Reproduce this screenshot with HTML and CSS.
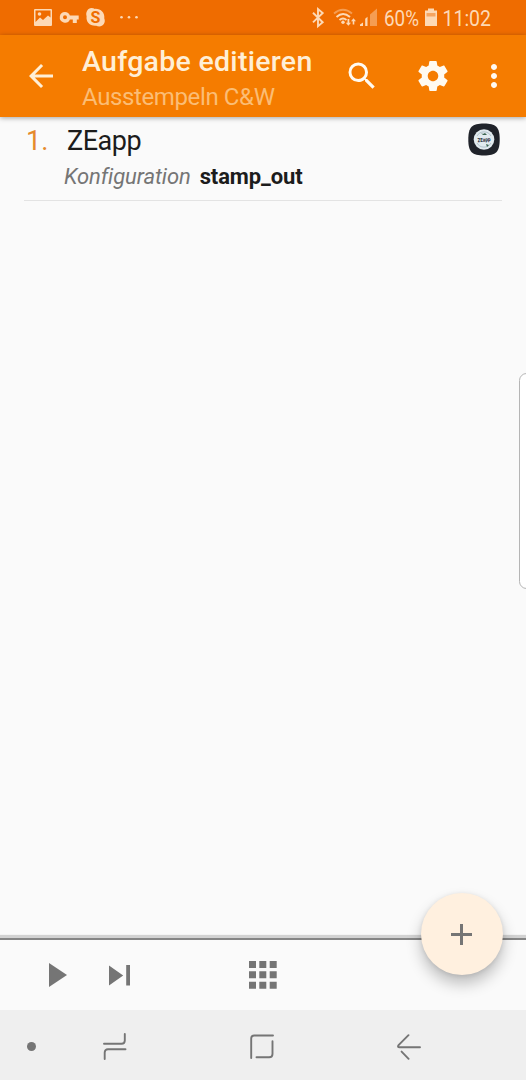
FILE: index.html
```html
<!DOCTYPE html>
<html lang="de">
<head>
  <meta charset="UTF-8" />
  <meta name="viewport" content="width=device-width, initial-scale=1.0"/>
  <title>Aufgabe editieren</title>
  <link rel="stylesheet" href="styles.css">
</head>
<body>

<div class="status-bar">
  <svg class="status-icons" width="110" height="35" viewBox="34 0 110 35">
    <!-- picture -->
    <path fill-rule="evenodd" d="M35 9h16a1 1 0 0 1 1 1v15a1 1 0 0 1-1 1H35a1 1 0 0 1-1-1V10a1 1 0 0 1 1-1zM35.500 10.500v11.500l4.500-4.500 3 2.500 5-4.500 2.500 2v-7z"/>
    <circle cx="39.500" cy="14" r="1.800"/>
    <!-- key -->
    <path fill-rule="evenodd" d="M65 12a5.300 5.300 0 0 1 4.900 3.500h8.800v4h-1.900v3.500h-4v-3.500h-2.900A5.300 5.300 0 1 1 65 12zm0 3.300a2 2 0 1 0 0 4 2 2 0 0 0 0-4z"/>
    <!-- skype -->
    <path d="M91.500 8c1.300 0 2.400.300 3.400.900C100.500 8.500 105 12.500 104.300 18.500c1.700 4-1.300 8-5 8-1.100 0-2.200-.300-3.100-.800C90 26.300 85.800 22 86.600 16.200 85.300 12.400 87.800 8 91.500 8z"/>
    <text class="skype-letter" x="95.400" y="22.800" text-anchor="middle">S</text>
    <circle cx="121.500" cy="17.300" r="1.300"/>
    <circle cx="129" cy="17.300" r="1.300"/>
    <circle cx="136.500" cy="17.300" r="1.300"/>
  </svg>
  <svg class="status-icons" width="190" height="35" viewBox="311 0 190 35">
    <!-- bluetooth -->
    <path class="line" d="M313 12.800l9.700 9.400-4.700 4V9l4.700 4-9.700 9.400"/>
    <!-- wifi -->
    <path class="line dim" d="M334 13.500q9-7.500 18 0"/>
    <path class="line" d="M336.500 17q6.500-6 13.500 0M339.500 20q3.500-3 7 0"/>
    <circle cx="343" cy="22.200" r="1.700"/>
    <path d="M347.500 19h1.800v3.800h1.700l-2.600 3-2.600-3h1.700zM352.700 24.500h1.600v-3.200h1.700l-2.500-3-2.500 3h1.700z"/>
    <!-- signal -->
    <path class="dim" d="M370 14.500l7-6V26h-7z"/>
    <path d="M360 26v-1.600l3-2V26zM365.200 26v-7.200l2.300-2V26z"/>
    <text class="status-text" x="384" y="25.800" textLength="35" lengthAdjust="spacingAndGlyphs">60%</text>
    <!-- battery -->
    <path d="M428 8.500h6v2h3V26h-12V10.500h3z"/>
    <path class="battery-gap" d="M426.500 13h9v3.500h-9z"/>
    <text class="status-text" x="442.500" y="25.800" textLength="48.500" lengthAdjust="spacingAndGlyphs">11:02</text>
  </svg>
</div>

<header class="app-bar">
  <svg class="bar-icon back" viewBox="0 0 24 24"><path d="M20 11H7.830l5.590-5.590L12 4l-8 8 8 8 1.410-1.410L7.830 13H20v-2z"/></svg>
  <div class="titles">
    <h1>Aufgabe editieren</h1>
    <p>Ausstempeln C&amp;W</p>
  </div>
  <svg class="bar-icon search" viewBox="0 0 24 24"><path d="M15.500 14h-.790l-.280-.270A6.471 6.471 0 0 0 16 9.500 6.500 6.500 0 1 0 9.500 16c1.610 0 3.090-.590 4.230-1.570l.270.280v.790l5 4.990L20.490 19l-4.990-5zm-6 0C7.010 14 5 11.990 5 9.500S7.010 5 9.500 5 14 7.010 14 9.500 11.990 14 9.500 14z"/></svg>
  <svg class="bar-icon gear" viewBox="0 0 24 24"><path d="M19.430 12.980c.040-.320.070-.640.070-.980s-.030-.660-.070-.980l2.110-1.650c.190-.150.240-.420.120-.640l-2-3.460c-.120-.220-.390-.300-.610-.220l-2.490 1c-.520-.400-1.080-.730-1.690-.980l-.380-2.650C14.460 2.180 14.250 2 14 2h-4c-.250 0-.460.180-.490.420l-.380 2.650c-.610.250-1.170.590-1.690.980l-2.490-1c-.230-.090-.490 0-.610.220l-2 3.460c-.130.220-.070.490.120.640l2.110 1.650c-.040.320-.070.650-.070.980s.030.660.070.980l-2.110 1.650c-.190.150-.240.420-.120.640l2 3.460c.120.220.390.300.610.220l2.490-1c.520.400 1.080.730 1.690.980l.380 2.650c.030.240.240.420.490.420h4c.250 0 .460-.180.490-.420l.380-2.650c.610-.250 1.170-.590 1.690-.980l2.490 1c.230.090.490 0 .610-.220l2-3.460c.120-.220.070-.490-.120-.640l-2.110-1.650zM12 15.500c-1.930 0-3.500-1.570-3.500-3.500s1.570-3.500 3.500-3.500 3.500 1.570 3.500 3.500-1.570 3.500-3.500 3.500z"/></svg>
  <svg class="bar-icon more" viewBox="0 0 24 24"><path d="M12 8c1.100 0 2-.900 2-2s-.900-2-2-2-2 .900-2 2 .900 2 2 2zm0 2c-1.100 0-2 .900-2 2s.900 2 2 2 2-.900 2-2-.900-2-2-2zm0 6c-1.100 0-2 .900-2 2s.900 2 2 2 2-.900 2-2-.900-2-2-2z"/></svg>
</header>

<main class="task-list">
  <div class="task-item">
    <span class="task-number">1.</span>
    <div class="task-content">
      <div class="task-name">ZEapp</div>
      <div class="task-config"><em>Konfiguration</em><strong>stamp_out</strong></div>
    </div>
    <svg class="app-icon" width="32" height="33" viewBox="0 0 32 33">
      <path class="app-tile" d="M16 .500C28 .500 31.700 4 31.700 16.500S28 32.500 16 32.500.300 29 .300 16.500 4 .500 16 .500z"/>
      <circle class="app-disc" cx="16" cy="16.500" r="10.300"/>
      <path class="app-ring" d="M9 13a8 8 0 0 1 14 0M9 20a8 8 0 0 0 14 0"/>
      <path class="app-mark" d="M13 10l2 1 2-1 2 2h-4zM18 21l3 1-2 2z"/>
      <text class="app-label" x="16" y="18.600" text-anchor="middle" textLength="13" lengthAdjust="spacingAndGlyphs" transform="rotate(-5 16 17)">ZEapp</text>
    </svg>
  </div>
  <div class="edge-handle"></div>
</main>

<div class="toolbar">
  <svg class="play" width="18" height="24" viewBox="0 0 18 24"><path d="M0 0l18 12L0 24z"/></svg>
  <svg class="next" width="21" height="21" viewBox="0 0 21 21"><path d="M0 .500l14.200 10L0 20.500zM17.200 0H21v20.500h-3.800z"/></svg>
  <svg class="grid" width="28" height="28" viewBox="0 0 28 28"><path d="M0 0h7v7H0zM10.300 0h7v7h-7zM20.700 0h7v7h-7zM0 10.300h7v7H0zM10.300 10.300h7v7h-7zM20.700 10.300h7v7h-7zM0 20.700h7v7H0zM10.300 20.700h7v7h-7zM20.700 20.700h7v7h-7z"/></svg>
  <button class="add-btn" title="Hinzufügen">
    <svg width="21" height="21" viewBox="0 0 21 21"><path d="M9 0h3v9h9v3h-9v9H9v-9H0V9h9z"/></svg>
  </button>
</div>

<nav class="nav-bar">
  <span class="nav-dot"></span>
  <svg class="recents" width="24" height="27" viewBox="0 0 24 27"><path d="M1 10.700h17.500q3.300 0 3.300-3.300V1M22.500 16.300H5q-3.300 0-3.300 3.300V26"/></svg>
  <svg class="home" width="24" height="25" viewBox="0 0 24 25"><path d="M1.200 24V4.500q0-3 3-3H23M22.500 7.200V20q0 3.300-3.300 3.300H6.500"/></svg>
  <svg class="nav-back" width="24" height="26" viewBox="0 0 24 26"><path d="M11.500 1.200L1.600 11.100q-1.500 2.200 1 2.200H23M4.600 17.600l7 7.200"/></svg>
</nav>

</body>
</html>
```
FILE: styles.css
```css
* {
  box-sizing: border-box;
}

body {
  margin: 0;
  width: 526px;
  height: 1080px;
  display: flex;
  flex-direction: column;
  overflow: hidden;
  background: #fafafa;
  font-family: Roboto, sans-serif;
}

svg {
  display: block;
  flex-shrink: 0;
}

/* Status bar */
.status-bar {
  height: 35px;
  padding: 0 25px 0 34px;
  display: flex;
  justify-content: space-between;
  background: #ef6c00;
}

.status-icons {
  fill: #fdd9b5;
}

.status-icons .line {
  fill: none;
  stroke: #fdd9b5;
  stroke-width: 1.9;
}

.status-icons .dim {
  opacity: 0.45;
}

.status-icons .battery-gap {
  fill: #f5a561;
}

.status-text {
  font-size: 22px;
}

.status-icons .skype-letter {
  font-size: 16px;
  font-weight: bold;
  fill: #ef6c00;
}

/* App bar */
.app-bar {
  height: 82px;
  padding: 0 14px 0 23px;
  display: flex;
  align-items: center;
  background: #f57c00;
  box-shadow: 0 1px 5px rgba(0, 0, 0, 0.35);
  z-index: 1;
}

.titles {
  width: 240px;
  margin-left: 23px;
  align-self: flex-start;
  white-space: nowrap;
}

.titles h1 {
  margin: 10px 0 0;
  font-size: 28.5px;
  font-weight: 500;
  line-height: 34px;
  letter-spacing: 0.28px;
  color: #ffefd6;
}

.titles p {
  margin: 3px 0 0;
  font-size: 24px;
  line-height: 30px;
  letter-spacing: -0.38px;
  color: #fbbd75;
}

.bar-icon {
  width: 36px;
  height: 36px;
  fill: #fffaf0;
}

.bar-icon.back {
  fill: #ffefd6;
}

.bar-icon.search {
  margin-left: 22px;
}

.bar-icon.gear {
  margin-left: 34.5px;
}

.bar-icon.more {
  margin-left: 25px;
}

/* Task list */
.task-list {
  flex: 1;
  position: relative;
}

.task-item {
  height: 84px;
  margin: 0 24px;
  padding: 6px 2px 0 2px;
  display: flex;
  align-items: flex-start;
  border-bottom: 1px solid #e3e3e3;
}

.task-number {
  width: 38px;
  font-size: 27px;
  line-height: 36px;
  color: #e58a2b;
}

.task-content {
  flex: 1;
}

.task-name {
  padding-left: 3px;
  font-size: 27px;
  line-height: 36px;
  letter-spacing: -0.45px;
  color: #1c1c1c;
}

.task-config {
  display: flex;
  gap: 9px;
  font-size: 22px;
  line-height: 35px;
  letter-spacing: -0.1px;
  color: #1c1c1c;
}

.task-config em {
  color: #757575;
}

.app-tile {
  fill: #20232a;
}

.app-disc {
  fill: #e2ebef;
}

.app-ring {
  fill: none;
  stroke: #a5b7c2;
  stroke-width: 0.8;
}

.app-mark {
  fill: #3d6650;
}

.app-label {
  font-size: 5.5px;
  font-weight: bold;
  fill: #14202c;
}

/* Edge panel handle, runs off the right side of the screen */
.edge-handle {
  position: absolute;
  top: 256px;
  right: -8px;
  width: 15px;
  height: 216px;
  border: 1px solid #b5b5b5;
  border-radius: 8px;
  background: #fff;
}

/* Bottom toolbar */
.toolbar {
  position: relative;
  height: 72px;
  padding: 0 0 0 49px;
  display: flex;
  align-items: center;
  border-top: 2px solid #858585;
  box-shadow: 0 -3px 1px #d2d2d2;
  fill: #757575;
}

.toolbar .next {
  margin-left: 42px;
}

.toolbar .grid {
  margin-left: 119px;
}

.add-btn {
  position: absolute;
  top: -47px;
  right: 23px;
  width: 82px;
  height: 82px;
  padding: 0 1px 0 0;
  display: flex;
  align-items: center;
  justify-content: center;
  border: none;
  border-radius: 50%;
  background: #fff0df;
  box-shadow: 0 9px 15px rgba(0, 0, 0, 0.24), 0 1px 5px rgba(0, 0, 0, 0.1);
  fill: #757575;
}

/* Navigation bar */
.nav-bar {
  height: 70px;
  padding: 3px 0 0 27px;
  display: flex;
  align-items: center;
  background: #efefef;
  fill: none;
  stroke: #757575;
  stroke-width: 1.9;
  stroke-linecap: round;
  z-index: 1;
}

.nav-dot {
  width: 9px;
  height: 9px;
  border-radius: 50%;
  background: #757575;
}

.recents {
  margin-left: 67px;
}

.home {
  margin-left: 123px;
}

.nav-back {
  margin-left: 123px;
}
```
